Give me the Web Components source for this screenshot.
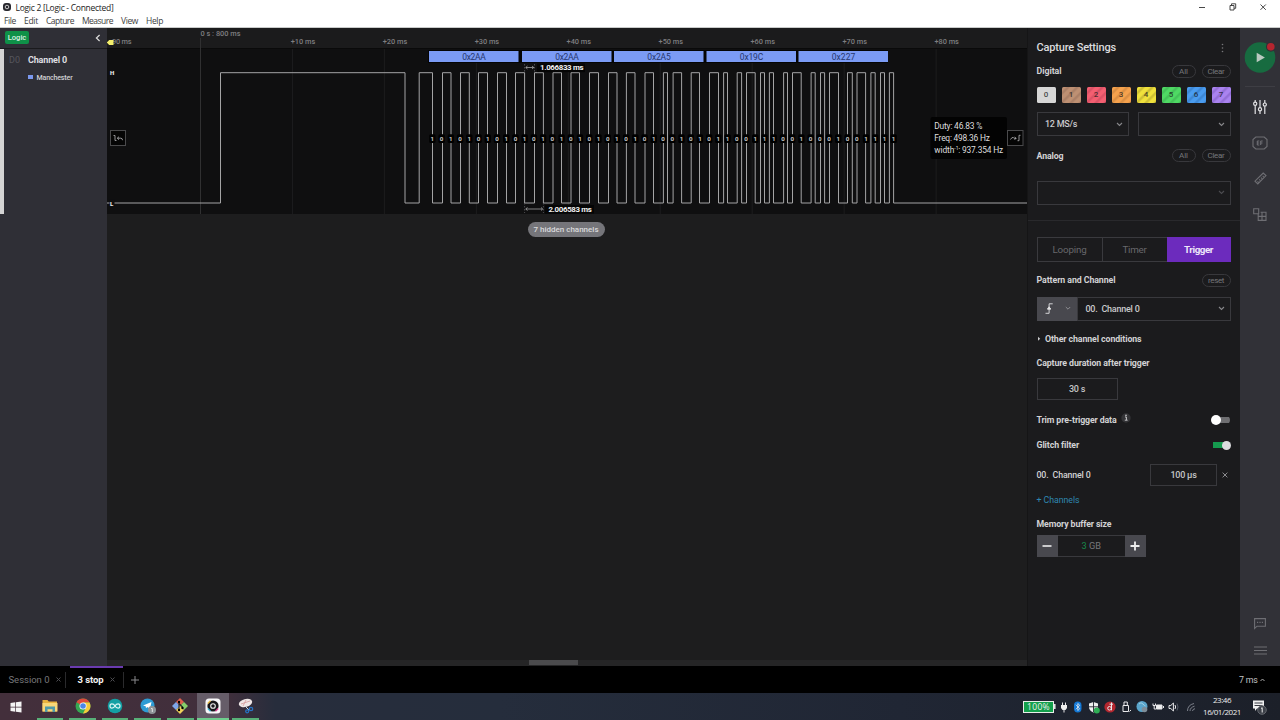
<!DOCTYPE html>
<html lang="en">
<head>
<meta charset="utf-8">
<title>Logic 2</title>
<style>
html,body{margin:0;height:100%;overflow:hidden;background:#1c1c1e}
</style>
</head>
<body>
<logic-app></logic-app>
<script>
const define = (name, html, setup) => {
  customElements.define(name, class extends HTMLElement {
    constructor() {
      super();
      const root = this.attachShadow({ mode: 'open' });
      const t = document.createElement('template');
      t.innerHTML = typeof html === 'function' ? html(this) : html;
      root.append(t.content.cloneNode(true));
      if (setup) setup(root, this);
    }
  });
};

/* ---------- small controls ---------- */
define('pill-button', `<style>
:host{display:block;box-sizing:border-box;height:13px;border:1px solid #38383c;border-radius:7px;font-size:8px;line-height:11px;text-align:center;color:#77777b}
</style><slot></slot>`);

define('channel-chip', el => `<style>
:host{display:block;box-sizing:border-box;flex:1;height:16px;border-radius:1.5px;text-align:center;font-size:8px;font-weight:500;line-height:16px;color:#1c1c1ecc;
background:${el.getAttribute('tone')}}
:host([striped]){background:repeating-linear-gradient(135deg,${el.getAttribute('tone')} 0 2.5px,${el.getAttribute('alt')} 4px 5px,${el.getAttribute('tone')} 6.5px)}
</style><slot></slot>`);

define('select-box', el => `<style>
:host{display:flex;box-sizing:border-box;height:24px;border:1px solid #39393d;align-items:center;padding:0 5px 0 7.5px;font-size:9px;color:#c9c9cb}
span{flex:1;white-space:pre}
svg{width:7px;height:5px;fill:none;stroke:${el.hasAttribute('dim') ? '#4c4c50' : '#88888b'};stroke-width:1.1}
</style><span><slot></slot></span><svg viewBox="0 0 7 5"><path d="M1 1l2.5 2.4L6 1"/></svg>`);

define('value-box', `<style>
:host{display:block;box-sizing:border-box;height:22px;border:1px solid #39393d;text-align:center;line-height:20px;font-size:9px;font-weight:500;color:#c4c4c6}
</style><slot></slot>`);

define('toggle-switch', `<style>
:host{display:flex;width:19px;height:10px;align-items:center;background:linear-gradient(#6e6e71,#6e6e71) 7px 50%/12px 6px no-repeat;border-radius:5px}
i{width:10px;height:10px;border-radius:50%;background:#fff}
:host([on]){justify-content:flex-end;background:linear-gradient(#159a4e,#159a4e) 1px 50%/12px 6px no-repeat}
:host([on]) i{background:#dcdcde;width:9px;height:9px}
</style><i></i>`);

/* ---------- window chrome ---------- */
define('title-bar', `<style>
:host{display:flex;flex-direction:column;height:28px;background:#fff;box-sizing:border-box;color:#222;font:8.5px "Open Sans","Noto Sans",sans-serif;border-bottom:1px solid #c9cbca}
div{display:flex;align-items:center}
.t{height:15px;padding-left:3px}
.t svg.l{width:8px;height:8px;margin-right:4.5px}
.t .w{margin-left:auto;width:66px;margin-right:12px}
.m{height:13px;padding-left:4px;color:#3c3c3c}
.m ui-label{margin-right:8px}
</style>
<div class="t"><svg class="l" viewBox="0 0 8 8"><rect width="8" height="8" rx="3" fill="#28282e"/><circle cx="4" cy="4" r="1.8" fill="none" stroke="#ddd" stroke-width=".9"/></svg>
<ui-label w="98">Logic 2 [Logic - Connected]</ui-label>
<svg class="w" width="66" height="12" viewBox="1202 1 66 12" fill="none" stroke="#333" stroke-width=".9"><path d="M1199 7.5h6"/><path d="M1230 5.5h4v4.5h-4zM1231.5 5.5v-1.7h4.2v4.5h-1.6"/><path d="M1260.5 4.5l5.3 5.3m0-5.3l-5.3 5.3"/></svg></div>
<div class="m"><ui-label w="12">File</ui-label><ui-label w="14">Edit</ui-label><ui-label w="28">Capture</ui-label><ui-label w="31">Measure</ui-label><ui-label w="17">View</ui-label><ui-label w="17">Help</ui-label></div>`,
  r => r.querySelector('.w').setAttribute('overflow', 'visible'));

/* ---------- channel list ---------- */
define('channel-list', `<style>
:host{display:flex;flex-direction:column;width:107px;flex:none;background:#2f2f36;box-sizing:border-box}
header{height:21px;display:flex;align-items:center;justify-content:space-between;padding:1px 6px 2px 5px;box-sizing:border-box;border-bottom:1px solid #1a1a1d}
b{display:block;background:#0f9148;color:#dff3e6;border-radius:2px;width:24px;height:13px;text-align:center;font-size:7.6px;font-weight:500;line-height:13px}
section{height:165px;border-left:4px solid #d4d4d4;box-sizing:border-box;display:grid;grid-template-columns:24px auto;grid-template-rows:22.5px 11px;align-items:center;font-size:9px;padding-left:0;align-content:start}
.d{color:#56565d;padding-left:5px}
.n{color:#dedee0;font-weight:700}
.m{grid-column:2;display:flex;align-items:center;font-size:7.1px;font-weight:500;color:#d0d0d3;gap:4px}
.m i{width:4.5px;height:4.5px;background:#7b98ee}
</style>
<header><b>Logic</b><svg width="6" height="8" viewBox="0 0 6 8" fill="none" stroke="#ddd" stroke-width="1.2"><path d="M4.6 1L1.4 4l3.2 3"/></svg></header>
<section><span class="d">D0</span><span class="n"><ui-label w="39">Channel 0</ui-label></span><span class="m"><i></i><ui-label w="36">Manchester</ui-label></span></section>`);

/* ---------- waveform ---------- */
const edges = [220.5,405,419.2,432.5,442.5,451,460.5,469.3,478.5,487.5,497.5,506.5,515.5,524.6,534.5,543.4,553,561.5,571,579.5,589.5,598.5,608.5,617,626.4,635,645,653.5,663.4,667.5,673.1,681.6,691.2,699.5,709.5,718.5,723.6,727.5,737.2,741.6,746.5,755.2,760.5,764.5,769.4,773.5,783.6,787.5,792.5,801.2,811.1,815.2,820.5,824.6,829.5,838.5,847.5,852.3,857,865.6,870.9,875.2,880.5,884.5,889.4,893.6];
const words = [['0x2AA',429],['0x2AA',522],['0x2A5',614],['0x19C',706.5],['0x227',798.5]];
const bits = '101010101010101010101010100101011001110010001001111';

define('logic-trace', () => {
  let d = 'M107 203', y = 203;
  edges.forEach(x => { y = y === 203 ? 72.7 : 203; d += `H${x}V${y}`; });
  d += 'H1027';
  let grid = '', ruler = '';
  for (let i = 0; i < 9; i++) {
    const x = 200.5 + i * 91.95;
    grid += `<path d="M${x} ${i ? 49 : 38}V214" stroke="${i ? '#1d1d1e' : '#303031'}"/>`;
    if (i) ruler += `<text x="${x - 1.7}" y="44.3" textLength="24.5">+${i * 10} ms</text>`;
  }
  const boxes = words.map(([t, x]) => `<rect x="${x}" y="51" width="89.5" height="11" fill="#7b9bf5"/><text x="${x + 45}" y="59.5" text-anchor="middle" textLength="23.5" font-size="8.5" fill="#26366e">${t}</text>`).join('');
  const marks = [...bits].map((b, i) => {
    const x = 432.4 + i * 9.225;
    return `<rect x="${x - 3.2}" y="134.3" width="6.4" height="8.6" rx="1.5" fill="#000"/><text x="${x}" y="141" text-anchor="middle">${b}</text>`;
  }).join('');
  return `<style>
:host{display:block;height:186px}
svg{display:block;font-family:Roboto,sans-serif}
</style>
<svg width="920" height="186" viewBox="107 28 920 186">
<rect x="107" y="28" width="920" height="21" fill="#1b1b1c"/>
<rect x="107" y="48" width="920" height="1.3" fill="#0a0a0a"/>
<rect x="107" y="49" width="920" height="165" fill="#0f0f10"/>
${grid}
<g fill="#7e7e80" font-size="7.4" font-weight="500">${ruler}<text x="112" y="44.3" textLength="19.5">90 ms</text><text x="200.5" y="36.2" textLength="40">0 s : 800 ms</text></g>
<path d="M106.8 42.5l2.400-2.600h4.300v5.200h-4.300z" fill="#f2ee6c"/>
<rect x="428" y="50" width="460" height="13" fill="#050505"/>
${boxes}
<path d="${d}" fill="none" stroke="#a4a4a5" stroke-width="1"/>
<g font-size="6.200" font-weight="700" fill="#c8c8c8">${marks}</g>
<rect x="109.500" y="199.500" width="5" height="7" fill="#0f0f10"/>
<g font-size="6" font-weight="900" fill="#e8e8e8"><text x="110" y="75">H</text><text x="110" y="205.500">L</text></g>
<g stroke="#66666a" stroke-width=".7"><path d="M524.600 64v8M534.500 64v8M524.600 203v10M543.400 203v10" stroke-dasharray="1.500 1.500"/></g>
<g fill="none" stroke="#b4b4b6" stroke-width=".7"><path d="M526 67.500h7.500M527.500 66l-1.800 1.500 1.800 1.500M532 66l1.800 1.500-1.800 1.500"/><path d="M526 209h16M527.500 207.500l-1.800 1.500 1.800 1.500M541 207.500l1.800 1.500-1.800 1.500"/></g>
<rect x="537" y="63.500" width="48" height="8.600" fill="#050505"/>
<rect x="545" y="205" width="49" height="8.600" fill="#050505"/>
<g font-size="7.900" font-weight="700" fill="#f2f2f2"><text x="540" y="70.200" textLength="43.500">1.066833 ms</text><text x="548.400" y="211.500" textLength="43.500">2.006583 ms</text></g>
<g fill="#050505" stroke="#4a4a4c" stroke-width="1"><rect x="110.500" y="130.500" width="15" height="15"/><rect x="1007.500" y="130.500" width="15.500" height="15"/></g>
<g fill="none" stroke="#a4a4a6" stroke-width=".9"><path d="M113.500 135.500h1.500v5h1.500M117.300 138.200h3.500q1.700 0 1.700 2M119 136.700l-1.700 1.500 1.700 1.500"/><path d="M1010.500 139.500q1.500-3 3-1.800t2.500.8M1014.700 136.800l1.500 1.700-1.900.8M1020.500 135.300h-1.500v5.400h-1.500"/></g>
<rect x="930.500" y="117" width="76.500" height="42" rx="2" fill="#030303"/>
<g font-size="8.400" fill="#dededf"><text x="934.300" y="128.600" textLength="48">Duty: 46.83 %</text><text x="934.300" y="140.600" textLength="55.500">Freq: 498.36 Hz</text><text x="934.300" y="152.600" textLength="20">width</text><text x="954.300" y="149.600" font-size="5">-1</text><text x="958.200" y="152.600" textLength="45">: 937.354 Hz</text></g>
</svg>`;
});

define('trace-view', `<style>
:host{display:flex;flex-direction:column;flex:1;min-width:0;background:#1d1d1e}
.h{align-self:center;margin-top:7.5px;margin-right:2px;box-sizing:border-box;width:77px;height:15.5px;border-radius:8px;background:#75757a;color:#dadadc;font-size:8px;font-weight:500;text-align:center;line-height:15.5px}
.s{margin-top:auto;height:6px;background:#252526;display:flex}
.s i{margin-left:422px;width:49px;height:5px;background:#4a4a4c}
</style><logic-trace></logic-trace><div class="h"><ui-label w="65">7 hidden channels</ui-label></div><div class="s"><i></i></div>`);

/* ---------- capture settings ---------- */
define('capture-settings', `<style>
:host{display:grid;width:213px;flex:none;box-sizing:border-box;padding:6px 9.5px 0 8.5px;background:#1b1b1d;border-left:1px solid #151516;
grid-template-rows:27px 20px 28px 30px 33px 41.5px 14.5px 42px 20.5px 36px 24px 24px 28px 34.5px 16px 6px 31px 19px 6px 17px 28px;align-content:start;align-items:center;color:#d2d2d4;font-size:8.8px;font-weight:700}
div{display:flex;align-items:center}
.sp{justify-content:space-between}
.g{gap:6px}
h1{margin:0;font-size:11px;font-weight:500;color:#dcdcde}
hr{border:0;border-top:1px solid #29292c;margin:0 -9px 0 -9px;width:auto}
pill-button{font-weight:400}
.all{width:24px;margin-left:auto;margin-right:6px}.clr{width:29px}
.tabs{box-sizing:border-box;height:25px;border:1px solid #3a3a3e;font-size:9.8px;font-weight:400;color:#68686c}
.tabs span{flex:1;display:flex;height:100%;align-items:center;justify-content:center;border-right:1px solid #3a3a3e}
.tabs span:last-child{background:#6c2bbd;border:0;color:#eee6fa;font-weight:700;margin:-1px;height:25px}
.edge{box-sizing:border-box;width:40.5px;height:24px;background:#48484e;justify-content:space-between;padding:0 6px 0 8px}
select-box{font-weight:500}
.st{height:22px;width:109.5px}
.st>i{width:21.5px;height:22px;background:#48484e;display:flex;align-items:center;justify-content:center}
.st>span{flex:1;box-sizing:border-box;height:22px;border:1px solid #39393d;border-width:1px 0;text-align:center;line-height:20px;font-weight:400;font-size:9.2px;color:#77777b}
.st>span b{color:#168a4a;font-weight:400}
.lnk{color:#2f87b0;font-weight:400}
</style>
<div class="sp"><h1><ui-label w="79.5">Capture Settings</ui-label></h1><svg width="3" height="10" viewBox="0 0 3 10" fill="#77777a" style="margin-right:6.5px"><circle cx="1.5" cy="1.5" r=".8"/><circle cx="1.5" cy="5" r=".8"/><circle cx="1.5" cy="8.5" r=".8"/></svg></div>
<div><ui-label w="25">Digital</ui-label><pill-button class="all">All</pill-button><pill-button class="clr"><ui-label w="17">Clear</ui-label></pill-button></div>
<div class="g"><channel-chip tone="#d6d6d6">0</channel-chip><channel-chip striped tone="#be9073" alt="#ab8067">1</channel-chip><channel-chip striped tone="#f45f71" alt="#dc5266">2</channel-chip><channel-chip striped tone="#f6a24d" alt="#dc9044">3</channel-chip><channel-chip striped tone="#f0e13c" alt="#cec034">4</channel-chip><channel-chip striped tone="#4fd964" alt="#44c259">5</channel-chip><channel-chip striped tone="#4a9cf0" alt="#3d88d6">6</channel-chip><channel-chip striped tone="#aa83f0" alt="#946fd8">7</channel-chip></div>
<div style="gap:9px"><select-box style="flex:1"><ui-label w="32">12 MS/s</ui-label></select-box><select-box style="flex:1"></select-box></div>
<div><ui-label w="27">Analog</ui-label><pill-button class="all">All</pill-button><pill-button class="clr"><ui-label w="17">Clear</ui-label></pill-button></div>
<select-box dim></select-box>
<hr>
<div class="tabs"><span><ui-label w="34">Looping</ui-label></span><span><ui-label w="24">Timer</ui-label></span><span><ui-label w="29">Trigger</ui-label></span></div>
<div class="sp"><ui-label w="79">Pattern and Channel</ui-label><pill-button class="clr"><ui-label w="16">reset</ui-label></pill-button></div>
<div><div class="edge"><svg width="9" height="11" viewBox="0 0 9 11" fill="none" stroke="#e2e2e4" stroke-width=".9"><path d="M.5 10.3h3.6V.8h3.6M2.2 6h3.8"/><path d="M2.6 6L4.1 3.8 5.6 6z" fill="#e2e2e4"/></svg><svg width="6" height="5" viewBox="0 0 6 5" fill="none" stroke="#8d8d92"><path d="M.8 1L3 3.2 5.2 1"/></svg></div><select-box style="flex:1"><ui-label w="54">00.&nbsp; Channel 0</ui-label></select-box></div>
<div><svg width="8.5" height="6" viewBox="0 0 8.5 6"><path d="M1 .8v4L3.2 2.8z" fill="#c9c9cb"/></svg><ui-label w="96.5">Other channel conditions</ui-label></div>
<div><ui-label w="113">Capture duration after trigger</ui-label></div>
<value-box style="width:81px"><ui-label w="16">30 s</ui-label></value-box>
<div><ui-label w="80">Trim pre-trigger data</ui-label><svg width="10" height="10" viewBox="0 0 10 10" style="margin:-3px 0 0 4px"><circle cx="5" cy="5" r="4.7" fill="#333336"/><path d="M4 4h1.4v3M3.8 7.2h2.8" stroke="#c4c4c6" fill="none"/><circle cx="5" cy="2.4" r=".8" fill="#c4c4c6"/></svg><toggle-switch style="margin-left:auto;margin-right:1px"></toggle-switch></div>
<div class="sp"><ui-label w="42.5">Glitch filter</ui-label><toggle-switch on></toggle-switch></div>
<div></div>
<div style="font-weight:500"><ui-label w="54">00.&nbsp; Channel 0</ui-label><value-box style="width:67px;margin-left:auto;margin-right:5px"><ui-label w="26">100 µs</ui-label></value-box><svg width="6" height="6" viewBox="0 0 6 6" stroke="#8a8a8d" style="margin-right:2.5px"><path d="M.6.6l4.8 4.8m0-4.8L.6 5.4"/></svg></div>
<div class="lnk"><ui-label w="43">+ Channels</ui-label></div>
<div></div>
<div><ui-label w="75">Memory buffer size</ui-label></div>
<div class="st"><i><svg width="10" height="10" stroke="#eee" stroke-width="1.6"><path d="M.5 5h9"/></svg></i><span><b>3</b> GB</span><i><svg width="10" height="10" stroke="#eee" stroke-width="1.8"><path d="M.5 5h9M5 .5v9"/></svg></i></div>`);

/* ---------- right rail ---------- */
define('tool-rail', `<style>
:host{display:flex;flex-direction:column;align-items:center;width:40px;flex:none;background:#313137}
svg{display:block;fill:none;stroke:#6e6e73;stroke-width:1.1;overflow:visible}
.play{margin-top:14px}
hr{width:30px;border:0;border-top:1px solid #3e3e44;margin:13px 0 0}
</style>
<svg class="play" width="32" height="31" viewBox="0 0 32 31" style="stroke:none"><circle cx="16" cy="15.5" r="15.3" fill="#176b40"/><path d="M12.7 10.8v9.4l8.2-4.7z" fill="#b9c9c0"/><circle cx="26.8" cy="4.8" r="4.9" fill="#313137"/><circle cx="26.8" cy="4.8" r="3.8" fill="#b5252f"/></svg>
<hr>
<svg width="14" height="14" viewBox="0 0 14 14" style="margin-top:13px;stroke:#e2e2e4;stroke-width:1.2"><path d="M2.2 0v2M2.2 5.2V14M7 0v7.5M7 11V14M11.8 0v3M11.8 6.2V14"/><circle cx="2.2" cy="3.7" r="1.6"/><circle cx="7" cy="9.3" r="1.6"/><circle cx="11.8" cy="4.6" r="1.6"/></svg>
<svg width="16" height="14" viewBox="0 0 16 14" style="margin-top:22px"><path d="M3.8 1h8.4L15 3.5v7L12.2 13H3.8L1 10.5v-7z"/><path d="M5.3 5h2M5.3 7h2M5.3 9h2M5.3 5v4M8.7 5v4M8.7 5h2M8.7 7h1.8"/></svg>
<svg width="13" height="13" viewBox="0 0 13 13" style="margin-top:22px"><path d="M1 9.2L9.2 1 12 3.6 3.8 11.9zM3.5 9.3l1 1M5.2 7.4l1 1M7 5.6l1 1M8.7 3.9l1 1"/></svg>
<svg width="14" height="13" viewBox="0 0 14 13" style="margin-top:23px"><path d="M.7.7h5v5h-5zM5.2 5.2v7.2h7.8V4.2H7.6M5.2 8.4H13M9 4.2v8.2"/></svg>
<svg width="12" height="11" viewBox="0 0 12 11" style="margin-top:auto"><path d="M.6.6h10.800v7.600H3L.6 10.400z"/><path d="M3 4.400h6" stroke-dasharray="1.200 1.200"/></svg>
<svg width="13" height="9" viewBox="0 0 13 9" style="margin:17px 0 11px;stroke-width:1.2"><path d="M0 1h13M0 4.500h13M0 8h13"/></svg>`);

/* ---------- session tabs ---------- */
define('session-tab', `<style>
:host{display:flex;box-sizing:border-box;height:27px;align-items:center;color:#77777a;font-size:9.5px;border-top:2px solid transparent;gap:6px;padding-bottom:2px}
:host([active]){color:#f2f2f2;font-weight:700;border-top-color:#6a3bb0}
</style><slot></slot><svg width="5" height="5" viewBox="0 0 5 5" stroke="#4c4c50"><path d="M.5.5l4 4m0-4l-4 4"/></svg>`);
define('session-tabs', `<style>
:host{display:flex;height:27px;flex:none;background:#000;align-items:center}
session-tab{width:62px;padding-left:8.500px}
session-tab[active]{width:53px;padding-left:8px}
.v{width:1px;height:16px;background:#2a2a2c}
.e{margin-left:auto;margin-right:15px;color:#c2c2c4;font-size:8.8px;display:flex;align-items:center;gap:2.5px}
</style><session-tab><ui-label w="41">Session 0</ui-label></session-tab><span style="width:7.5px;display:flex;justify-content:center"><i class="v"></i></span><session-tab active><ui-label w="26">3 stop</ui-label></session-tab><i class="v"></i>
<svg width="8" height="8" viewBox="0 0 8 8" stroke="#8a8a8d" style="margin-left:7px"><path d="M0 4h8M4 0v8"/></svg>
<span class="e"><ui-label w="18.5">7 ms</ui-label><svg width="5" height="4" fill="none" stroke="#aaa"><path d="M.5 3l2-2 2 2"/></svg></span>`);

/* ---------- desktop taskbar ---------- */
const icon = b => `<svg width="16" height="16" viewBox="0 0 16 16">${b}</svg>`;
define('task-item', `<style>
:host{display:flex;width:26.6px;height:27px;margin:0 3px;box-sizing:border-box;align-items:center;justify-content:center;border-bottom:2px solid #58b078;padding-top:1px}
:host([active]){width:32.6px;margin:0;background:#665d69;border-bottom-color:#6fcf8e}
</style><slot></slot>`);
define('task-bar', `<style>
:host{display:flex;height:27px;flex:none;align-items:center;background:linear-gradient(90deg,#432f3b 0,#412f3c 225px,#272d3c 275px,#252d3c 500px,#202634 900px,#1c2029 1280px);color:#eee;font-family:"Open Sans","Noto Sans",sans-serif;font-size:8px}
.win{width:33.7px;display:flex;justify-content:center}
.tray{margin-left:auto;width:257px;display:flex;align-items:center}
.clk{width:44px;display:flex;flex-direction:column;align-items:center;line-height:12px;margin-top:-1px}
.bat{box-sizing:border-box;width:31px;height:12px;border:1px solid #e8efe9;background:#13a04c;text-align:center;line-height:10px;font-size:8.5px}
svg.tr{overflow:visible}
</style>
<div class="win"><svg width="12" height="12" viewBox="0 0 12 12" fill="#f4f4f4" style="margin-left:-2px"><path d="M.5 2l4.800-.7v4.400H.5zM6 1.200L11.500.5v5.200H6zM.5 6.400h4.800v4.300l-4.800-.7zM6 6.400h5.500v5.200L6 10.800z"/></svg></div>
<task-item>${icon('<path d="M.5 2h5l1.200 1.500H15v10H.5z" fill="#e8b23e"/><path d="M.5 5h15v8.500H.5z" fill="#f8d778"/><path d="M3 14V8.500h10V14h-2.500v-2.800h-5V14z" fill="#4f9aa8"/>')}</task-item>
<task-item>${icon('<circle cx="8" cy="8" r="7.5" fill="#35a852"/><path d="M8 8L1.500 4.300A7.500 7.500 0 0 1 14.600 4.500H8z" fill="#df4a3b"/><path d="M8 4.500h6.600A7.500 7.500 0 0 1 8 15.500L11 9.700z" fill="#f6cb3b"/><circle cx="8" cy="8" r="3.5" fill="#fff"/><circle cx="8" cy="8" r="2.8" fill="#4a86e8"/>')}</task-item>
<task-item>${icon('<circle cx="8" cy="8" r="7.3" fill="#13a0a4"/><path d="M8 8C6.500 5.200 3 5.200 3 8s3.500 2.800 5 0 5-2.800 5 0-3.500 2.800-5 0z" fill="none" stroke="#d9f4f3" stroke-width="1.2"/>')}</task-item>
<task-item>${icon('<circle cx="7.5" cy="7.5" r="7" fill="#2d9bd4"/><path d="M3 7.500l8.500-3.500-1.500 7-2.800-2-1.200 1.200-.3-2z" fill="#fff"/><circle cx="12" cy="12" r="4" fill="#8e9498"/><path d="M11 10.500h1.300v3.500" stroke="#eee" fill="none" stroke-width=".9"/>')}</task-item>
<task-item>${icon('<path d="M8 0l4 4-4 4-4-4z" fill="#e0604e"/><path d="M4 4l4 4-4 4-4-4z" fill="#7ea6e8"/><path d="M12 4l4 4-4 4-4-4z" fill="#87cf6a"/><path d="M8 8l4 4-4 4-4-4z" fill="#f0d35a"/><path d="M7 3.500v9M7 5.500l3.500 3.500v2" stroke="#222" stroke-width="1.100" fill="none"/><circle cx="7" cy="12" r="1.200"/><circle cx="10.500" cy="10" r="1.200"/><circle cx="7" cy="4" r="1.200"/>')}</task-item>
<task-item active>${icon('<rect x=".5" y=".5" width="15" height="15" rx="3.5" fill="#f7f7f9"/><circle cx="8" cy="8" r="5.6" fill="#18181b"/><path d="M2.800 5.500L5.500 2.800" stroke="#e9be45" stroke-width="1.300"/><path d="M2.800 10.500L5.500 13.200" stroke="#3fb6d6" stroke-width="1.300"/><path d="M10.500 13.200l2.700-2.700" stroke="#d8418d" stroke-width="1.300"/><circle cx="8" cy="8" r="2.300" fill="none" stroke="#eee" stroke-width="1.100"/>')}</task-item>
<task-item>${icon('<ellipse cx="7.5" cy="5" rx="6.8" ry="4" transform="rotate(-15 7.5 5)" fill="#efe6e6"/><path d="M3 6l9-3M5 8l3-6" stroke="#d59a9c" stroke-width=".8"/><path d="M7 8l4 4" stroke="#cfd6de"/><circle cx="13" cy="11" r="1.700" fill="none" stroke="#2673c4" stroke-width="1.300"/><circle cx="9.200" cy="13.300" r="1.500" fill="none" stroke="#2673c4" stroke-width="1.300"/>')}</task-item>
<div class="tray"><div class="bat"><ui-label w="23">100%</ui-label></div>
<svg class="tr" width="146" height="16" viewBox="1054 699 146 16" fill="none" stroke="#e8e8ea" stroke-width="1">
<path d="M1054.800 704v5" stroke-width="1.5"/>
<path d="M1061 705h6v3l-1.500 2h-3l-1.500-2z" fill="#eee" stroke="none"/><path d="M1062.500 702.500v2.500M1065.500 702.500v2.500M1064 709v3.500"/>
<rect x="1074" y="701.500" width="7.5" height="11" rx="3.7" fill="#1378d6" stroke="none"/><path d="M1075.800 704.700l4 4-2 1.800v-7l2 1.800-4 4" stroke-width=".8"/>
<path d="M1089 703.500l4.500-1.500 4.500 1.500v3.500q0 3.500-4.500 5.500-4.500-2-4.500-5.500z" fill="#eee" stroke="none"/><path d="M1093.500 702v10M1089 706.800h9" stroke="#22252f" stroke-width=".9"/><circle cx="1096.800" cy="710.500" r="3" fill="#2fae55" stroke="none"/>
<circle cx="1110" cy="707" r="5.600" fill="#b3262e" stroke="none"/><circle cx="1109.500" cy="708.300" r="1.800"/><path d="M1111.500 702.500v7.800M1109.500 704.200h3.500"/>
<path d="M1123 705.500h5.500v6h-5.500zM1124 705.500v-3.500h3.300v3.500M1129.500 711.500l1.500-1.500"/>
<circle cx="1142" cy="706.500" r="5.500" fill="#5aa5cb" stroke="none"/><path d="M1139 704q2-2.500 4 0t2.500 2" stroke="#9fd0e4"/><circle cx="1144.500" cy="709.500" r="2.800" fill="#7f8d98" stroke="none"/>
<path d="M1156.500 705h5.500v4h-5.500z" fill="#eee"/><path d="M1163.500 706v2M1153 703.500v2h2.500v-2M1154.200 705.500v3.500h2"/>
<path d="M1169 705.500h1.800l2.600-2.500v8l-2.600-2.500h-1.800z"/><path d="M1175 705q1.300 2 0 4"/><path d="M1177 703.500q2 3.500 0 7" stroke="#555a66"/>
<g stroke="#7c808a"><path d="M1187.500 711q0-6 6.500-7.500M1190 711q0-3.500 4.500-4.800M1192.500 711q0-1.800 2.500-2.300"/></g>
</svg>
<div class="clk"><ui-label w="18">23:46</ui-label><ui-label w="38">16/01/2021</ui-label></div>
<svg width="18" height="17" viewBox="0 0 18 17" style="margin-left:5px"><path d="M4 2.500h11v8H8L6 13v-2.500H4z" fill="#f0f0f0"/><path d="M5.500 5h8M5.500 7.500h8" stroke="#23262f" stroke-width=".9"/><circle cx="13" cy="12" r="4.300" fill="#3c4048" stroke="#73767c" stroke-width=".8"/><path d="M12 10.500l1.200-.8V14.500" stroke="#eee" fill="none"/></svg>
</div>`);

define('logic-app', `<style>
:host{display:flex;flex-direction:column;width:1280px;height:720px;font-family:Roboto,"Liberation Sans",sans-serif;overflow:hidden}
main{display:flex;flex:1;min-height:0}
</style><title-bar></title-bar><main><channel-list></channel-list><trace-view></trace-view><capture-settings></capture-settings><tool-rail></tool-rail></main><session-tabs></session-tabs><task-bar></task-bar>`);

/* A one-line label that tracks its letters so that the run is exactly `w` pixels wide. */
customElements.define('ui-label', class extends HTMLElement {
  constructor() {
    super();
    this.attachShadow({ mode: 'open' }).innerHTML = `<style>:host{display:inline-block;white-space:nowrap;flex:none;text-align:left}span{display:inline-block}</style><span><slot></slot></span>`;
  }
  connectedCallback() {
    const w = +this.getAttribute('w'), span = this.shadowRoot.querySelector('span');
    const natural = span.getBoundingClientRect().width, n = this.textContent.length;
    span.style.letterSpacing = (w - natural) / n + 'px';
    this.style.width = w + 'px';
  }
});
</script>
</body>
</html>
